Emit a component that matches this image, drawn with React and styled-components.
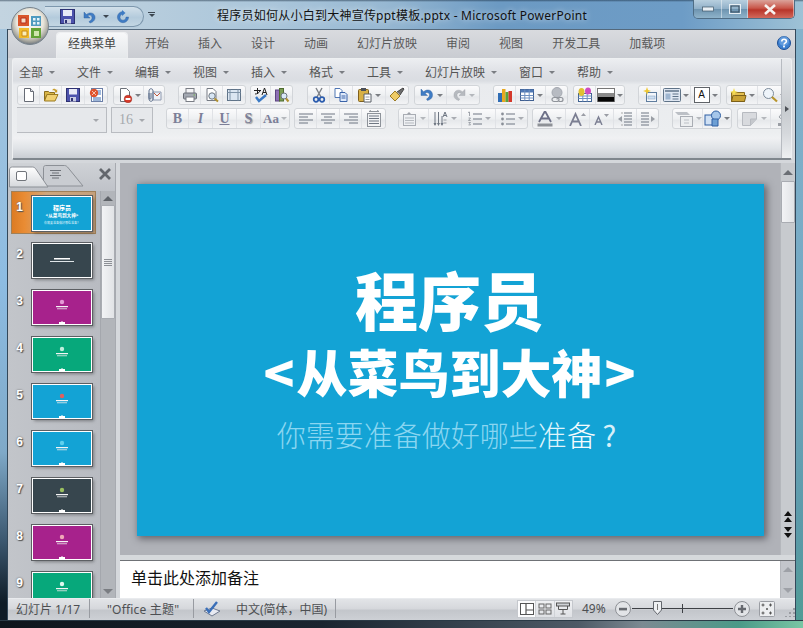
import React from "react";
import styled, { createGlobalStyle } from "styled-components";

const Global = createGlobalStyle`
  html, body { margin: 0; padding: 0; background: #000; }
  #root { width: 803px; height: 628px; }
`;
const CJK = `"Noto Sans", "Noto Sans CJK SC", sans-serif`;

const Window = styled.div`
  position: relative; width: 803px; height: 628px; overflow: hidden;
  display: flex; flex-direction: column; box-sizing: border-box;
  font-family: ${CJK}; font-size: 12px; color: #555;
  background:
    linear-gradient(180deg, #a8c6dc 0%, #8dbce2 45%, #7fa9c8 72%, #3c5870 86%, #0e1b26 96%) left top / 7px 100% no-repeat,
    linear-gradient(180deg, #86b3cc 0%, #74a9c4 50%, #5b9aa8 85%, #4f9c94 100%) right top / 7px 100% no-repeat,
    #6f9fc7;
`;
const TitleBar = styled.div`
  height: 29px; flex: none; display: flex; align-items: flex-start; box-sizing: border-box;
  background:
    linear-gradient(180deg, rgba(20,40,60,.55) 0, rgba(20,40,60,0) 2px),
    linear-gradient(90deg, #c3d4e0 0%, #b7cddd 18%, #a9c5da 35%, #97b8d2 48%, #6c9ac3 62%, #6d9cc6 85%, #9ec2d6 100%);
`;
const Qat = styled.div`
  margin: 6px 0 0 45px; width: 99px; height: 21px; box-sizing: border-box; flex: none;
  padding-left: 15px; display: flex; align-items: center; gap: 7px;
  border: 1px solid #7d97ad; border-left: 0; border-radius: 0 12px 12px 0;
  background: linear-gradient(180deg, #d2e0ea, #b4cbdc 55%, #c3d6e3);
`;
const QatMore = styled.div`
  margin: 12px 0 0 4px; width: 7px; flex: none; display: flex; flex-direction: column; align-items: center; gap: 1px;
  &::before { content: ""; width: 7px; height: 1px; background: #3b4650; }
`;
const Title = styled.div`
  flex: 1; padding: 8px 44px 0 0; text-align: center; font-size: 12px; line-height: 16px; color: #111; white-space: nowrap;
  letter-spacing: .24px; text-shadow: 0 0 6px rgba(255,255,255,.8);
`;
const WinControls = styled.div`
  flex: none; width: 102px; height: 19px; margin-right: 8px; display: flex; box-sizing: border-box;
  border: 1px solid #4f6d85; border-top: 0; border-radius: 0 0 5px 5px; overflow: hidden;
`;
const WinBtn = styled.div`
  display: flex; align-items: center; justify-content: center; box-sizing: border-box;
  width: ${p => p.$w}px; border-right: 1px solid rgba(255,255,255,.45);
  background: ${p => p.$close
    ? "linear-gradient(180deg, #dba39a 0, #c9574a 45%, #b8352a 55%, #d2695c 100%)"
    : "linear-gradient(180deg, #b8cfdf 0, #90b0c8 48%, #6e94b0 52%, #8fb3ca 100%)"};
`;
const OfficeBtn = styled.div`
  position: absolute; left: 11px; top: 7px; width: 38px; height: 38px; z-index: 5;
`;
const Client = styled.div`
  flex: 1; min-height: 0; margin: 0 7px; display: flex; flex-direction: column;
  border-left: 1px solid #33485a; border-right: 1px solid #33485a; background: #d5d8dc;
`;
const TabStrip = styled.div`
  height: 29px; flex: none; box-sizing: border-box; padding: 3px 0 0 49px; display: flex; align-items: stretch;
  border-top: 1px solid #54697c; position: relative;
  background: linear-gradient(180deg, #d9dbdf 0, #c9ccd2 100%);
`;
const Tab = styled.div`
  display: flex; align-items: center; box-sizing: border-box; line-height: 20px; color: #5a5a5a; padding-bottom: 4px;
  ${p => p.$active ? `
    padding-left: 11px; padding-right: 11px; margin-right: 3.5px; color: #444; border-radius: 3px 3px 0 0;
    background: linear-gradient(180deg, #f7f8f9, #e4e7ea);
    box-shadow: 0 0 0 1px rgba(255,255,255,.6);
  ` : `padding-left: 14.5px; padding-right: 14.5px;`}
`;
const HelpWrap = styled.div`
  margin-left: auto; margin-right: 4px; margin-top: 3px;
`;
const Ribbon = styled.div`
  height: 102px; flex: none; box-sizing: border-box; margin: 0 3px 0 4px; padding: 3px 9px 0 4px;
  position: relative; overflow: hidden;
  border: 1px solid #eef0f2; border-bottom: 2px solid #7f868d; border-radius: 3px 3px 2px 2px;
  background: linear-gradient(180deg, #eceef1 0, #dee0e5 14%, #dadde2 22%, #e9ebee 26%, #eceef0 74%, #f0f1f3 80%, #e0e3e7 90%, #c9cdd3 100%);
`;
const MenuRow = styled.div`
  height: 21px; display: flex; align-items: center; padding-left: 2px;
`;
const Menu = styled.div`
  width: ${p => p.$w}px; flex: none; display: flex; align-items: center; gap: 6px; color: #555; line-height: 18px;
`;
const Arrow = styled.span`
  display: inline-block; width: 0; height: 0; flex: none;
  border-left: 3px solid transparent; border-right: 3px solid transparent; border-top: 3px solid ${p => p.$c || "#7a7d82"};
`;
const ToolRow = styled.div`
  display: flex; align-items: flex-start; margin-top: 2px; height: ${p => p.$h}px; width: 770px; overflow: hidden;
`;
const Group = styled.div`
  display: flex; flex: none; height: ${p => p.$h || 18}px; margin-left: ${p => p.$ml || 0}px; box-sizing: content-box;
  border: 1px solid #d2d5d9; border-radius: 3px; margin-top: ${p => p.$mt || 0}px;
  background: linear-gradient(180deg, #fbfbfc 0, #eef0f2 50%, #e6e8eb 60%, #f3f4f6 100%);
`;
const Btn = styled.div`
  width: ${p => p.$w || 22}px; flex: none; display: flex; align-items: center; justify-content: center; gap: 2px;
  box-sizing: border-box; border-right: 1px solid #e0e2e6;
  &:last-child { border-right: 0; }
`;
const Letter = styled.span`
  font-family: "Liberation Serif", serif; font-size: ${p => p.$s || 14}px; font-weight: 700; color: #7c7f98;
  font-style: ${p => p.$i ? "italic" : "normal"}; text-decoration: ${p => p.$u ? "underline" : "none"};
  text-shadow: ${p => p.$sh ? "1px 1px 1px #999" : "none"};
`;
const Combo = styled.div`
  width: ${p => p.$w}px; height: 26px; box-sizing: border-box; flex: none; margin-right: 4px;
  margin-left: ${p => p.$ml || 0}px;
  display: flex; align-items: center; padding: 0 7px; justify-content: space-between;
  border: 1px solid #b9bcc1; background: #e6e8eb; color: #a5a8ad;
  font-family: "Liberation Serif", serif; font-size: 14px;
`;
const Chevron = styled.div`
  position: absolute; right: 0; top: 0; bottom: 0; width: 9px; display: flex; align-items: center; justify-content: center;
  border-left: 1px solid #b7bbc1;
  background: linear-gradient(180deg, #e7e9ec 0, #c6cace 50%, #d5d8dc 75%, #eef0f2 100%);
  &::after { content: ""; border-top: 3px solid transparent; border-bottom: 3px solid transparent; border-left: 4px solid #4d5157; }
`;
const Workspace = styled.div`
  height: 438px; flex: none; box-sizing: border-box; padding-top: 3px; display: flex; background: #d4d7db;
`;
const SidePane = styled.div`
  width: 107px; flex: none; display: flex; flex-direction: column; background: #bdc0c6;
`;
const SideTabs = styled.div`
  height: 28px; flex: none; box-sizing: border-box; display: flex; align-items: flex-start; padding-top: 1px;
  background: linear-gradient(180deg, #cfd2d6, #bfc2c8);
`;
const CloseX = styled.div`
  margin: 3px 3px 0 auto;
`;
const ListWrap = styled.div`
  flex: 1; min-height: 0; display: flex;
`;
const ThumbList = styled.div`
  width: 92px; flex: none; overflow: hidden; display: flex; flex-direction: column; gap: 4px;
  background: linear-gradient(90deg, #c2c5ca, #b8bbc1);
`;
const ThumbRow = styled.div`
  height: 43px; flex: none; margin-left: 3px; width: 85px; box-sizing: border-box; display: flex; position: relative;
  ${p => p.$sel && `
    background: linear-gradient(90deg, #db7a22 0, #e98c34 16%, #cfa77e 42%, #c4a07c 100%);
    box-shadow: inset 0 0 0 1px #a08058;
  `}
`;
const Num = styled.div`
  width: 21px; flex: none; text-align: center; padding: 9px 4px 0 0; box-sizing: border-box;
  font-family: "Liberation Sans", sans-serif; font-size: 12px; font-weight: 700; line-height: 14px; color: #fff;
  text-shadow: 1px 1px 1px #555, 0 0 2px #666;
`;
const Thumb = styled.div`
  width: 60px; height: 35px; margin-top: 5px; flex: none; box-sizing: border-box;
  border: 1px solid #fff; outline: 1px solid #5c5f63; outline-offset: 0; overflow: hidden;
  background: ${p => p.$c}; box-shadow: 2px 2px 3px rgba(0,0,0,.35);
  display: flex; flex-direction: column; align-items: center; color: #fff; white-space: nowrap;
`;
const MiniA = styled.div`font-size: 6px; line-height: 7px; font-weight: 900; margin-top: 8px;`;
const MiniB = styled.div`font-size: 4.6px; line-height: 6px; font-weight: 700;`;
const MiniC = styled.div`font-size: 3px; line-height: 6px; color: #d8f0fa; margin-top: 2px;`;
const ScrollBar = styled.div`
  width: 15px; flex: none; box-sizing: border-box; display: flex; flex-direction: column; align-items: stretch;
  background: ${p => p.$bg || "#b2b5ba"}; border-left: 1px solid ${p => p.$line || "#a4a7ad"};
`;
const SBtn = styled.div`
  height: ${p => p.$h || 14}px; flex: none; display: flex; align-items: center; justify-content: center;
`;
const Up = styled.span`width: 0; height: 0; border-left: 5px solid transparent; border-right: 5px solid transparent; border-bottom: 5px solid ${p => p.$c || "#5e6268"};`;
const Down = styled.span`width: 0; height: 0; border-left: 5px solid transparent; border-right: 5px solid transparent; border-top: 5px solid ${p => p.$c || "#7a7d82"};`;
const SThumb = styled.div`
  height: ${p => p.$h}px; flex: none; box-sizing: border-box; display: flex; align-items: center; justify-content: center;
  border: 1px solid #a9acb2; border-radius: 1px;
  background: linear-gradient(90deg, #f2f3f5, #e1e3e6);
`;
const Grip = styled.div`
  width: 8px; height: 7px; background: repeating-linear-gradient(180deg, #8c8f95 0 1px, transparent 1px 2px);
`;
const SSpace = styled.div`flex: 1;`;
const Splitter = styled.div`width: 5px; flex: none; background: #d5d8dc; border-left: 1px solid #a7aab0; box-sizing: border-box;`;
const MainCol = styled.div`width: 675px; flex: none; display: flex; flex-direction: column;`;
const Upper = styled.div`height: 392px; flex: none; display: flex;`;
const Stage = styled.div`
  width: 660px; flex: none; box-sizing: border-box; padding: 21px 0 0 17px; background: #b0b2b8;
`;
const Slide = styled.div`
  width: 627px; height: 352px; box-sizing: border-box; padding-top: 78px; background: #13a3d5;
  box-shadow: 2px 2px 7px 1px rgba(40,40,50,.55);
  display: flex; flex-direction: column; align-items: center; color: #fff; white-space: nowrap;
  font-family: "Noto Sans CJK SC", sans-serif;
`;
const Head = styled.div`font-size: 63px; line-height: 72px; font-weight: 900; margin-left: -2px;`;
const Sub = styled.div`font-size: 51px; line-height: 74px; font-weight: 900; display: flex; align-items: center; gap: 2px; margin-left: -2px;`;
const Tag = styled.div`font-size: 29px; line-height: 44px; font-weight: 300; color: #8ad6f1; display: flex; margin-top: 4px; margin-left: -8px;`;
const TagPart = styled.span`color: ${p => p.$c}; font-weight: ${p => p.$w || 300};`;
const Sep = styled.div`height: 5px; flex: none; background: #d6d9dc;`;
const Lower = styled.div`height: 38px; flex: none; display: flex; border-top: 1px solid #6f7276; box-sizing: border-box;`;
const Notes = styled.div`
  width: 660px; flex: none; box-sizing: border-box; padding-left: 11px; background: #fff; color: #111;
  font-size: 16px; line-height: 32px; font-family: "Noto Sans CJK SC", sans-serif;
`;
const StatusBar = styled.div`
  height: 22px; flex: none; display: flex; align-items: center; box-sizing: border-box; color: #4d4f52;
  border-top: 1px solid #e9ebee; padding-bottom: 2px;
  background: linear-gradient(180deg, #e2e4e7 0, #d6d8dc 45%, #c3c6cb 55%, #cdd0d5 100%);
`;
const Seg = styled.div`
  width: ${p => p.$w}px; height: 100%; flex: none; box-sizing: border-box; padding-left: ${p => p.$pl}px;
  display: flex; align-items: center; border-right: 1px solid #989ba1; white-space: nowrap; gap: ${p => p.$gap || 0}px;
  letter-spacing: ${p => p.$ls || 0}px;
`;
const StatusRight = styled.div`
  margin-left: auto; display: flex; align-items: center; height: 100%;
`;
const ViewGroup = styled.div`
  display: flex; width: 56px; height: 18px; box-sizing: border-box; border: 1px solid #c5c8cd;
  background: linear-gradient(180deg, #f0f1f3, #dfe1e5); margin-right: 9px;
`;
const ViewBtn = styled.div`
  flex: 1; display: flex; align-items: center; justify-content: center; border-right: 1px solid #d0d3d7;
  background: ${p => p.$on ? "#fbfbfc" : "transparent"};
  &:last-child { border-right: 0; }
`;
const Pct = styled.div`width: 24px; margin-right: 9px; font-size: 12px; white-space: nowrap;`;
const ZoomBtn = styled.div`width: 16px; height: 16px; flex: none;`;
const Track = styled.div`
  width: 101px; margin: 0 1px; height: 1px; background: #3d4045; position: relative; flex: none;
`;
const Handle = styled.div`position: absolute; left: 21px; top: -7px; width: 9px; height: 14px;`;
const Tick = styled.div`position: absolute; left: 50px; top: -4px; width: 1px; height: 9px; background: #3d4045;`;
const Fit = styled.div`width: 16px; height: 16px; margin-left: 9px; flex: none;`;
const SizeGrip = styled.div`width: 10px; height: 10px; margin: 6px 0 0 10px; flex: none;`;
const BottomFrame = styled.div`
  height: 8px; flex: none; border-top: 1px solid #2a3a46; box-sizing: border-box;
  background: linear-gradient(90deg, #0e151c 0, #1a2530 40%, #4d5a66 72%, #7b8a92 80%, #4a9a88 92%, #79c6a4 100%);
`;

const G = ({ children, w = 16, h = 16, vb }) => (
  <svg width={w} height={h} viewBox={vb || `0 0 ${w} ${h}`} style={{ display: "block", flex: "none" }}>{children}</svg>
);

const OfficeLogo = () => (
  <G w={38} h={38}>
    <defs>
      <radialGradient id="orb" cx="50%" cy="40%" r="60%">
        <stop offset="0" stopColor="#fbfbf6" /><stop offset=".6" stopColor="#e9e6dc" /><stop offset=".85" stopColor="#a9a89f" /><stop offset="1" stopColor="#6f7780" />
      </radialGradient>
    </defs>
    <circle cx="19" cy="19" r="18.5" fill="url(#orb)" stroke="#77838d" />
    <path d="M7 8h11v11H7z" fill="#d9562a" /><path d="M10 11h5v5h-5z" fill="#f6dcc2" stroke="#b8301c" />
    <path d="M20 9h10v10H20z" fill="#4f9bc0" /><path d="M22 11h2.500v2.500H22zM26 11h2.500v2.500H26zM22 15h2.500v2.500H22zM26 15h2.500v2.500H26z" fill="#e7f3f8" />
    <path d="M8 21h10v10H8z" fill="#f1bb2a" /><path d="M11 24h5v5h-5z" fill="#fbeeb8" stroke="#c98a14" />
    <path d="M20 21h10v10H20z" fill="#62a336" /><path d="M23 24h5v5h-5z" fill="#cfe6ad" />
  </G>
);
const I = {
  qSave: <G w={15} h={15}><rect x=".5" y=".5" width="14" height="14" fill="#4c52ac" stroke="#2d3172" /><rect x="3" y="1" width="9" height="6" fill="#e8eaf6" /><rect x="4" y="10" width="7" height="4.5" fill="#c9cce2" /><rect x="5" y="11" width="2" height="3" fill="#2d3172" /></G>,
  qUndo: <G w={14} h={14}><path d="M2 2v6h6L5.6 5.8C7.5 4.4 9.8 5.2 10 7.2c.2 2-1 3.4-3 4.4l1 1.4c3.6-1 5.4-3.2 5-6.2C12.6 3 8 1.500 4.4 4.500z" fill="#3f7cc4" stroke="#2a5a9a" strokeWidth=".4" /></G>,
  qRedo: <G w={14} h={14}><path d="M7 1.500a5.600 5.600 0 1 0 5.600 5.600h-2.600A3 3 0 1 1 7 4.200z" fill="#3f7cc4" stroke="#2a5a9a" strokeWidth=".4" /><path d="M6 0v6l3.500-3z" fill="#3f7cc4" /></G>,
  min: <G w={12} h={6}><rect x=".5" y="1" width="11" height="4" fill="#e8eff4" stroke="#3f5668" strokeWidth=".7" /></G>,
  max: <G w={12} h={10}><rect x=".5" y=".5" width="11" height="9" fill="none" stroke="#e8eff4" /><rect x="2" y="2" width="8" height="6" fill="none" stroke="#34495a" /></G>,
  close: <G w={14} h={11}><path d="M2 1l10 9M12 1L2 10" stroke="#f7f1ee" strokeWidth="2.600" /></G>,
  help: <G w={14} h={14}><circle cx="7" cy="7" r="6.500" fill="#3b7fd0" stroke="#1d4e94" /><circle cx="7" cy="5" r="5" fill="#86b6ea" opacity=".5" /><path d="M4.800 5.400C4.800 2.600 9.400 2.600 9.400 5.200 9.400 6.800 7 6.800 7 8.600" fill="none" stroke="#fff" strokeWidth="1.600" /><rect x="6.100" y="9.600" width="1.800" height="1.800" fill="#fff" /></G>,
  new: <G><path d="M3.500 1.500h6l3 3v10h-9z" fill="#fff" stroke="#666b75" /><path d="M9.500 1.500v3h3" fill="#dfe2ea" stroke="#666b75" /></G>,
  open: <G><path d="M1.500 4.500h4l1 1h5v2H4l-2.500 6z" fill="#d9b648" stroke="#8a6d20" /><path d="M4 7.500h11l-3 6.500H1.500z" fill="#f0d071" stroke="#9a7a20" /><path d="M9 3.400c1-2.200 3.200-2.200 4.200-.4l1-.8v3.200h-3l1-1c-.7-1-1.900-1.200-3.200-1z" fill="#c9a030" /></G>,
  save: <G><rect x="1.500" y="1.500" width="13" height="13" fill="#4c52ac" stroke="#2d3172" /><rect x="4" y="2" width="8" height="5.500" fill="#e8eaf6" /><rect x="5" y="10" width="6" height="4.500" fill="#c9cce2" /><rect x="6" y="11" width="2" height="3" fill="#2d3172" /></G>,
  ppt: <G><rect x="3.500" y="1.500" width="11" height="13" fill="#fff" stroke="#6b7fa8" /><rect x="9" y="3" width="4" height="5" fill="#9fb8dc" /><circle cx="6" cy="6" r="4.200" fill="#e0532c" /><path d="M4 4l4 4M4 8l4-4" stroke="#f6c4b0" /><path d="M5 11h8M5 13h8" stroke="#3a6db0" /></G>,
  perm: <G><path d="M3.500 1.500h6l3 3v10h-9z" fill="#fff" stroke="#6b7078" /><circle cx="11" cy="12" r="3.800" fill="#d83a2a" stroke="#902014" strokeWidth=".5" /><rect x="8.600" y="11" width="4.800" height="2" fill="#fff" /></G>,
  attach: <G><path d="M7 5h8v8H7z" fill="#eef2f8" stroke="#8f9ab0" /><path d="M8 6l3 3 3-3" fill="none" stroke="#c0563a" /><path d="M3 6v6c0 3 4 3 4 0V4C7 1 3 1 3 4v7c0 1.500 2 1.500 2 0V6" fill="none" stroke="#5d6f8c" /></G>,
  print: <G><rect x="4" y="1.500" width="8" height="5" fill="#f4f4f6" stroke="#7a7e86" /><rect x="1.500" y="6" width="13" height="6" rx="1" fill="#a4a9b2" stroke="#686d76" /><rect x="4" y="10" width="8" height="4.500" fill="#fff" stroke="#7a7e86" /><rect x="11.500" y="7.500" width="1.500" height="1" fill="#6fb04a" /></G>,
  preview: <G><path d="M3 1.500h6l3 3v9H3z" fill="#fff" stroke="#767b84" /><circle cx="8" cy="9" r="3.200" fill="#d8e6f4" stroke="#6d7680" /><path d="M10.500 11.500l3.500 3" stroke="#b09030" strokeWidth="2" /></G>,
  sheet: <G><rect x="1.500" y="2.500" width="13" height="11" fill="#dbe6f2" stroke="#5f7388" /><path d="M1.500 5.500h13M4 2.500v11M12 2.500v11" stroke="#7f93a8" /></G>,
  spell: <G><path d="M1 3.500h7M4.500 1v6M2 7c2 0 4-1 5-3" fill="none" stroke="#222" /><path d="M9 8l2.500-7L14 8M10 5.500h3" fill="none" stroke="#222" /><path d="M3 10l3 4 7-6" fill="none" stroke="#3a79c4" strokeWidth="2.400" /></G>,
  research: <G><rect x="1.500" y="3" width="4" height="11" fill="#8d6fb4" stroke="#5a4480" /><rect x="5.500" y="1.500" width="4" height="12.500" fill="#7b9c54" stroke="#4f6c30" /><circle cx="10" cy="9" r="3" fill="#d9e8f6" stroke="#6d7680" /><path d="M12 11.500l2.500 3" stroke="#b09030" strokeWidth="2" /></G>,
  cut: <G><path d="M5 1l5 9M11 1L6 10" stroke="#7d8188" strokeWidth="1.400" /><circle cx="5" cy="12.500" r="2.300" fill="none" stroke="#2b5cae" strokeWidth="1.700" /><circle cx="11" cy="12.500" r="2.300" fill="none" stroke="#2b5cae" strokeWidth="1.700" /></G>,
  copy: <G><path d="M2 1.500h5l2 2v7H2z" fill="#fff" stroke="#4f76b4" /><path d="M7 5.500h5l2 2v7H7z" fill="#dfeafa" stroke="#3a63a8" /><path d="M8.500 9h4M8.500 11h4" stroke="#3a63a8" /></G>,
  paste: <G><rect x="1.500" y="2.500" width="10" height="12" rx="1" fill="#d7b045" stroke="#80601c" /><rect x="4" y="1" width="5" height="3" fill="#4a4f58" /><path d="M7 7h7v8H7z" fill="#fff" stroke="#5b6068" /><path d="M8.500 10h4M8.500 12.500h4" stroke="#9a9ea5" /></G>,
  painter: <G><path d="M1 9l5-5 5 5-5 5z" fill="#eecb66" stroke="#9b7a24" /><path d="M8 5l6-4 1 1-4 6" fill="#6f6f6f" stroke="#444" /></G>,
  undo: <G><path d="M2 2v6.500h6.500L6 6.200c2-1.400 4.300-.6 4.500 1.400.2 2-1 3.400-3 4.400l1 1.500c3.600-1 5.400-3.300 5-6.300C13 3 8.300 1.500 4.600 4.700z" fill="#3f7cc4" stroke="#2a5a9a" strokeWidth=".4" /></G>,
  redo: <G><path d="M14 2.500v6H8l2.300-2.200C8.500 5 6.300 5.700 6 7.700c-.2 2 .8 3.300 2.700 4.300l-1 1.500C4.200 12.500 2.500 10.300 3 7.300 3.500 3.200 8 1.800 11.500 4.800z" fill="#b6babf" stroke="#9ca0a6" strokeWidth=".4" /></G>,
  chart: <G><rect x="1" y="6" width="4" height="9" fill="#2f6db5" /><rect x="5" y="2" width="3.500" height="13" fill="#e8a820" /><rect x="8.500" y="5" width="3" height="10" fill="#5ba33c" /><rect x="11.500" y="4" width="3.500" height="11" fill="#d4382a" /></G>,
  table: <G><rect x="1.500" y="2.500" width="13" height="11" fill="#fff" stroke="#3f5f90" /><rect x="1.500" y="2.500" width="13" height="3" fill="#4f78b4" /><path d="M1.500 8.500h13M1.500 11h13M5.800 2.500v11M10.200 2.500v11" stroke="#6f90c0" /></G>,
  link: <G><circle cx="8" cy="5.500" r="5" fill="#b7bbc2" stroke="#a4a8b0" /><path d="M3 12.500a2 2 0 0 1 2-2h3a2 2 0 0 1 0 4H5a2 2 0 0 1-2-2zM8 12.500a2 2 0 0 1 2-2h2a2 2 0 0 1 0 4h-2" fill="none" stroke="#8f939a" strokeWidth="1.200" /></G>,
  colors: <G><rect x="1.500" y="6.500" width="13" height="8" fill="#fff" stroke="#3f6190" /><path d="M1.500 9h13M1.500 11.500h13M5.800 6.500v8M10.200 6.500v8" stroke="#6f90c0" /><ellipse cx="4.500" cy="5" rx="3" ry="4" fill="#e0c030" /><ellipse cx="11" cy="4" rx="3" ry="3.500" fill="#d04cc0" /></G>,
  fill: <G w={18} h={14}><rect x=".5" y=".5" width="17" height="13" fill="#fff" stroke="#777" /><rect x="1" y="5" width="16" height="4" fill="#8a8a8a" /><rect x="1" y="9" width="16" height="4.500" fill="#050505" /></G>,
  newSlide: <G><rect x="4.500" y="5.500" width="10" height="9" fill="#f4f7fb" stroke="#5f7d9e" /><rect x="6" y="9" width="7" height="3" fill="#cfe0f2" stroke="#7f9dbc" strokeWidth=".5" /><path d="M5 0l1 3 3 1-3 1-1 3-1-3-3-1 3-1z" fill="#f0c830" /></G>,
  layout: <G w={18} h={14}><rect x=".5" y=".5" width="17" height="13" rx="1" fill="#dfe7f2" stroke="#5f7388" /><path d="M2 3h14" stroke="#5f7388" strokeWidth="1.500" /><rect x="2.500" y="5.500" width="5" height="6" fill="#9fb6d0" /><path d="M9.500 6h6M9.500 8.500h6M9.500 11h6" stroke="#5f7388" /></G>,
  folder: <G w={17} h={15}><path d="M1.500 4.500h13v9h-13z" fill="#e4c050" stroke="#8a6d20" /><path d="M3 7.500h13l-1.500 6h-13z" fill="#c9a234" stroke="#7b5f18" /><path d="M4 0l1 3 3 1-3 1-1 3-1-3-3-1 3-1z" fill="#f4dc50" /></G>,
  search: <G><circle cx="6.500" cy="6.500" r="5" fill="#eef4fa" stroke="#7b8a9a" /><path d="M10 10l5 4.500" stroke="#b8952c" strokeWidth="2.200" /></G>,
  alL: <G><path d="M1 3h14M1 6h9M1 9h14M1 12h9" stroke="#6f7783" /></G>,
  alC: <G><path d="M1 3h14M4 6h8M1 9h14M4 12h8" stroke="#6f7783" /></G>,
  alR: <G><path d="M1 3h14M6 6h9M1 9h14M6 12h9" stroke="#6f7783" /></G>,
  alJ: <G w={16} h={18}><rect x="1.500" y="3.500" width="13" height="13" fill="#f2f3f5" stroke="#8e939a" /><path d="M3 6h10M3 8.500h10M3 11h10M3 13.500h10" stroke="#6f7783" /><path d="M3 1.500h10" stroke="#8e939a" /><path d="M3 1.500l2-1M13 1.500l-2-1" stroke="#8e939a" /></G>,
  txtDir: <G><rect x="1.500" y="3.500" width="12" height="11" fill="#eef0f3" stroke="#a9adb4" /><path d="M3 7h9M3 9.500h9M3 12h9" stroke="#b5b9bf" /><path d="M7 1l-2 2h4z" fill="#9ea2a9" /></G>,
  valign: <G><path d="M2 1v13M5.500 1v13M9 5v9" stroke="#6f7783" /><path d="M.5 12l1.500 3 1.500-3zM4 12l1.500 3L7 12zM7.500 12L9 15l1.500-3z" fill="#6f7783" /><path d="M10 6l2-5 2 5M11 4.500h2" fill="none" stroke="#6f7783" /><path d="M10.500 9h3M10.500 12h3" stroke="#9a9ea5" /></G>,
  numList: <G><path d="M6 3h9M6 8h9M6 13h9" stroke="#6f7783" /><path d="M1 1.500l1.500-.5v4M1.500 7h2l-2 2.500h2.200M1.500 11.500h2l-1 1.200 1 1.200h-2" fill="none" stroke="#8a8f98" strokeWidth=".8" /></G>,
  bulList: <G><path d="M6 3h9M6 8h9M6 13h9" stroke="#6f7783" /><circle cx="2.500" cy="3" r="1.400" fill="#8a8f98" /><circle cx="2.500" cy="8" r="1.400" fill="#8a8f98" /><circle cx="2.500" cy="13" r="1.400" fill="#8a8f98" /></G>,
  fontCol: <G w={18} h={16}><path d="M3 11L8.500 1h1L15 11M5.500 7.500h7" fill="none" stroke="#6d7088" strokeWidth="1.800" /><rect x="1.500" y="12.500" width="15" height="3" fill="#8e9197" /></G>,
  grow: <G w={18} h={14}><path d="M1 14L6.500 2 12 14M3.500 9.500h6" fill="none" stroke="#7b7e92" strokeWidth="1.800" /><path d="M12 4l2.500-3L17 4z" fill="#9a9da5" /></G>,
  shrink: <G w={16} h={12}><path d="M1 12L4.500 4 8 12M2.500 9h4" fill="none" stroke="#7b7e92" strokeWidth="1.400" /><path d="M10 1h5l-2.500 3z" fill="#9a9da5" /></G>,
  dedent: <G><path d="M7 2h8M7 5h8M7 8h8M7 11h8M7 14h8" stroke="#6f7783" /><path d="M1 8l4-3v6z" fill="#9a9ea5" /><path d="M4 2h2M4 14h2" stroke="#aaa" /></G>,
  indent: <G><path d="M1 2h8M1 5h8M1 8h8M1 11h8M1 14h8" stroke="#6f7783" /><path d="M15 8l-4-3v6z" fill="#9a9ea5" /></G>,
  shapeA: <G w={20} h={16}><path d="M1 1h12l3 3H4z" fill="#bcc0c6" /><rect x="6.500" y="5.500" width="12" height="10" fill="#eceef0" stroke="#a9adb4" /><path d="M10 9h5M10 12h5" stroke="#bcc0c6" /></G>,
  shapes: <G w={18} h={17}><rect x="1" y="5" width="9" height="10" fill="#cfe0f4" stroke="#2e5fa3" /><circle cx="12" cy="5.500" r="4.500" fill="#a5c6ea" stroke="#2e5fa3" /><path d="M8 9h6v7H8z" fill="#6d9fd4" stroke="#2e5fa3" /></G>,
  quick: <G w={18} h={17}><path d="M1.500 2.500h14V9l-6 6.500h-8z" fill="#d8dade" stroke="#b7bac0" /><path d="M9.500 15.500V9h6" fill="#c5c8cd" stroke="#b7bac0" /></G>,
  bucket: <G w={20} h={17}><path d="M8 1l6 6-5 5-6-5z" fill="#eceef0" stroke="#9a9ea5" /><rect x="2" y="13" width="16" height="3" fill="#9a9ea5" /></G>,
  viewN: <G w={14} h={12}><rect x=".5" y=".5" width="13" height="11" fill="#fff" stroke="#555" /><path d="M6 .5v11M6 7h7.500" stroke="#555" strokeWidth="1.200" /></G>,
  viewS: <G w={14} h={12}><rect x="1" y="1" width="5" height="4" fill="none" stroke="#666" /><rect x="8" y="1" width="5" height="4" fill="none" stroke="#666" /><rect x="1" y="7" width="5" height="4" fill="none" stroke="#666" /><rect x="8" y="7" width="5" height="4" fill="none" stroke="#666" /></G>,
  viewP: <G w={14} h={13}><rect x=".5" y="1" width="13" height="3" fill="#cfd2d6" stroke="#555" /><path d="M2.500 4v3.500h9V4M7 7.500V12M4.500 12h5" fill="none" stroke="#555" /></G>,
  spellS: <G w={20} h={18}><path d="M2 11l8-3 8 3-8 5z" fill="#e8eaf2" stroke="#6f7a90" /><path d="M4 8l3 4L15 2" fill="none" stroke="#3a6fb8" strokeWidth="2.400" /></G>,
  minus: <G><circle cx="8" cy="8" r="7.500" fill="#e2e4e7" stroke="#8e9196" /><rect x="4" y="6.800" width="8" height="2.600" fill="#66696f" /></G>,
  plus: <G><circle cx="8" cy="8" r="7.500" fill="#e2e4e7" stroke="#8e9196" /><path d="M4 8h8M8 4v8" stroke="#66696f" strokeWidth="2.400" /></G>,
  handle: <G w={9} h={14}><path d="M.5.5h8V9l-4 4.500-4-4.500z" fill="#eef0f2" stroke="#63676d" /><path d="M4.500 3v6" stroke="#777" /></G>,
  fit: <G><rect x=".5" y=".5" width="15" height="15" rx="1" fill="#eceef0" stroke="#9a9da3" /><path d="M4 2.500v3M2.500 4h3M11.500 2.500v3M10 4h3M4 10.500v3M2.500 12h3M11.500 10.500v3M10 12h3M8 7v2M7 8h2" stroke="#555" /></G>,
  sgrip: <G w={10} h={10}><path d="M8 1h2v2H8zM8 5h2v2H8zM4 5h2v2H4zM8 9h2v1H8zM4 9h2v1H4zM0 9h2v1H0z" fill="#9a9da2" /></G>,
  x: <G w={14} h={14}><path d="M2 2l10 10M12 2L2 12" stroke="#63676d" strokeWidth="2.800" /></G>,
  tabs: <G w={78} h={24}>
    <defs><linearGradient id="tg" x1="0" x2="0" y1="0" y2="1"><stop offset="0" stopColor="#fff" /><stop offset="1" stopColor="#d5d8dc" /></linearGradient></defs>
    <path d="M35.500 22V3.500c0-1 1-2 2-2h19c1 0 2 .5 3 1.500L75 22z" fill="#c9ccd1" stroke="#8c9096" />
    <path d="M1.500 23V6c0-2 1-3 3-3h20c1 0 2 .5 3 1.500L40 23z" fill="url(#tg)" stroke="#8c9096" />
    <rect x="8.500" y="7.500" width="10" height="9" rx="1.500" fill="#fff" stroke="#70747a" />
    <path d="M42 6.500h11M44 9h7M42 11.500h11M44 14h7" stroke="#6d7177" />
  </G>,
};

const ART = {
  bars: (<><rect x="21" y="14" width="16" height="1.500" fill="#fff" /><rect x="17" y="17" width="24" height="1" fill="#dfe5e8" /></>),
  std: (c) => (<>
    <circle cx="29" cy="11" r="2.200" fill={c} />
    <rect x="23" y="15" width="12" height="1.200" fill="#f4f4f4" />
    <rect x="24" y="17.400" width="10" height=".8" fill="#e8e8e8" />
    <path d="M28.500 30h1v1h2.500v2h-6v-2h2.500z" fill="#fff" />
  </>),
};
const MiniArt = ({ kind, c }) => (
  <G w={58} h={33}>{kind === "bars" ? ART.bars : ART.std(c)}</G>
);

const SLIDES = [
  { n: 1, c: "#13a3d5", title: true },
  { n: 2, c: "#37464e", kind: "bars" },
  { n: 3, c: "#a7228c", i: "#e49ad6" },
  { n: 4, c: "#07a87b", i: "#bfeedd" },
  { n: 5, c: "#13a3d5", i: "#e2605e" },
  { n: 6, c: "#13a3d5", i: "#5fd0ee" },
  { n: 7, c: "#37464e", i: "#9ac060" },
  { n: 8, c: "#a7228c", i: "#f0a8b8" },
  { n: 9, c: "#07a87b", i: "#e0f8ee" },
];
const MENUS = [["全部", 58], ["文件", 58], ["编辑", 58], ["视图", 58], ["插入", 58], ["格式", 58], ["工具", 58], ["幻灯片放映", 94], ["窗口", 58], ["帮助", 58]];
const TABS = ["开始", "插入", "设计", "动画", "幻灯片放映", "审阅", "视图", "开发工具", "加载项"];

const ROW1 = [
  [0, [["new", 22], ["open", 22], ["save", 23], ["ppt", 22]]],
  [5, [["perm", 30, 1], ["attach", 20]]],
  [13, [["print", 22], ["preview", 22], ["sheet", 22]]],
  [4, [["spell", 20], ["research", 21]]],
  [14, [["cut", 22], ["copy", 23], ["paste", 33, 1], ["painter", 22]]],
  [5, [["undo", 32, 1], ["redo", 32, 1, "#b4b7bc"]]],
  [13, [["chart", 22], ["table", 30, 1], ["link", 21]]],
  [5, [["colors", 22], ["fill", 28, 1]]],
  [13, [["newSlide", 22], ["layout", 30, 1], ["textA", 29, 1]]],
  [5, [["folder", 31, 1], ["search", 31, 1]]],
];
const ROW2B = [
  [4, [["alL", 22], ["alC", 23], ["alR", 22], ["alJ", 23]]],
  [12, [["txtDir", 30, 1, "#b4b7bc"], ["valign", 33, 1, "#a9acb2"], ["numList", 34, 1, "#a9acb2"], ["bulList", 31, 1, "#a9acb2"]]],
  [4, [["fontCol", 33, 1, "#a9acb2"], ["grow", 24], ["shrink", 24], ["dedent", 23], ["indent", 21]]],
  [13, [["shapeA", 30, 1, "#b4b7bc"], ["shapes", 28, 1]]],
  [5, [["quick", 33, 1, "#b4b7bc"], ["bucket", 30]]],
];
const TextA = styled.div`
  width: 16px; height: 16px; box-sizing: border-box; border: 1px solid #5f6368; background: #fff; color: #111;
  font-family: "Liberation Sans", sans-serif; font-size: 10px; line-height: 14px; text-align: center;
`;
const renderGroups = (row, mt, h) => row.map(([ml, btns], i) => (
  <Group key={i} $ml={ml} $mt={mt} $h={h}>
    {btns.map(([k, w, arrow, ac]) => (
      <Btn key={k} $w={w}>
        {k === "textA" ? <TextA>A</TextA> : I[k]}
        {arrow ? <Arrow $c={ac} /> : null}
      </Btn>
    ))}
  </Group>
));

export default function App() {
  return (
    <Window>
      <Global />
      <OfficeBtn><OfficeLogo /></OfficeBtn>
      <TitleBar>
        <Qat>
          {I.qSave}
          {I.qUndo}
          <Arrow $c="#3c4650" />
          {I.qRedo}
        </Qat>
        <QatMore><Arrow $c="#3b4650" /></QatMore>
        <Title>程序员如何从小白到大神宣传ppt模板.pptx - Microsoft PowerPoint</Title>
        <WinControls>
          <WinBtn $w={29}>{I.min}</WinBtn>
          <WinBtn $w={26}>{I.max}</WinBtn>
          <WinBtn $w={47} $close>{I.close}</WinBtn>
        </WinControls>
      </TitleBar>
      <Client>
        <TabStrip>
          <Tab $active>经典菜单</Tab>
          {TABS.map(t => <Tab key={t}>{t}</Tab>)}
          <HelpWrap>{I.help}</HelpWrap>
        </TabStrip>
        <Ribbon>
          <MenuRow>
            {MENUS.map(([m, w]) => <Menu key={m} $w={w}>{m}<Arrow /></Menu>)}
          </MenuRow>
          <ToolRow $h={20}>{renderGroups(ROW1, 0, 18)}</ToolRow>
          <ToolRow $h={27}>
            <Combo $w={91} $ml={-1}><span /><Arrow $c="#a5a8ad" /></Combo>
            <Combo $w={42}>16<Arrow $c="#a5a8ad" /></Combo>
            <Group $ml={9} $mt={1} $h={19}>
              <Btn $w={22}><Letter>B</Letter></Btn>
              <Btn $w={24}><Letter $i>I</Letter></Btn>
              <Btn $w={24}><Letter $u>U</Letter></Btn>
              <Btn $w={24}><Letter $sh>S</Letter></Btn>
              <Btn $w={28}><Letter $s={13}>Aa</Letter><Arrow $c="#b4b7bc" /></Btn>
            </Group>
            {renderGroups(ROW2B, 1, 19)}
          </ToolRow>
          <Chevron />
        </Ribbon>
        <Workspace>
          <SidePane>
            <SideTabs>
              {I.tabs}
              <CloseX>{I.x}</CloseX>
            </SideTabs>
            <ListWrap>
              <ThumbList>
                {SLIDES.map(s => (
                  <ThumbRow key={s.n} $sel={s.title}>
                    <Num>{s.n}</Num>
                    <Thumb $c={s.c}>
                      {s.title ? (
                        <>
                          <MiniA>程序员</MiniA>
                          <MiniB>&lt;从菜鸟到大神&gt;</MiniB>
                          <MiniC>你需要准备做好哪些准备？</MiniC>
                        </>
                      ) : <MiniArt kind={s.kind} c={s.i} />}
                    </Thumb>
                  </ThumbRow>
                ))}
              </ThumbList>
              <ScrollBar>
                <SBtn><Up /></SBtn>
                <SThumb $h={114}><Grip /></SThumb>
                <SSpace />
                <SBtn><Down /></SBtn>
              </ScrollBar>
            </ListWrap>
          </SidePane>
          <Splitter />
          <MainCol>
            <Upper>
              <Stage>
                <Slide>
                  <Head>程序员</Head>
                  <Sub><span>&lt;</span>从菜鸟到大神<span>&gt;</span></Sub>
                  <Tag>
                    你需要准备做好哪些
                    <TagPart $c="#dff4fb">准</TagPart>
                    <TagPart $c="#f4fbfe">备</TagPart>
                    <TagPart $c="#d6eff9" $w={400}>&nbsp;?</TagPart>
                  </Tag>
                </Slide>
              </Stage>
              <ScrollBar $bg="#c7cace" $line="#b4b7bc">
                <SBtn $h={18}><Up $c="#6a6e74" /></SBtn>
                <SThumb $h={42} />
                <SSpace />
                <SBtn $h={16}><DoubleUp /></SBtn>
                <SBtn $h={16}><DoubleDown /></SBtn>
                <SBtn $h={15} />
              </ScrollBar>
            </Upper>
            <Sep />
            <Lower>
              <Notes>单击此处添加备注</Notes>
              <ScrollBar $bg="#c3c6cb" $line="#b4b7bc">
                <SBtn $h={16}><Up $c="#9ea1a7" /></SBtn>
                <SSpace />
                <SBtn $h={16}><Down $c="#9ea1a7" /></SBtn>
              </ScrollBar>
            </Lower>
          </MainCol>
        </Workspace>
        <StatusBar>
          <Seg $w={82} $pl={8}>幻灯片 1/17</Seg>
          <Seg $w={104} $pl={17} $ls={.2}>"Office 主题"</Seg>
          <Seg $w={142} $pl={8} $gap={14}>{I.spellS}<span>中文(简体，中国)</span></Seg>
          <StatusRight>
            <ViewGroup>
              <ViewBtn $on>{I.viewN}</ViewBtn>
              <ViewBtn>{I.viewS}</ViewBtn>
              <ViewBtn>{I.viewP}</ViewBtn>
            </ViewGroup>
            <Pct>49%</Pct>
            <ZoomBtn>{I.minus}</ZoomBtn>
            <Track>
              <Tick />
              <Handle>{I.handle}</Handle>
            </Track>
            <ZoomBtn>{I.plus}</ZoomBtn>
            <Fit>{I.fit}</Fit>
            <SizeGrip>{I.sgrip}</SizeGrip>
          </StatusRight>
        </StatusBar>
      </Client>
      <BottomFrame />
    </Window>
  );
}

function DoubleUp() {
  return <G w={10} h={11}><path d="M5 0l4 5H1zM5 6l4 5H1z" fill="#111" /></G>;
}
function DoubleDown() {
  return <G w={10} h={11}><path d="M1 0h8L5 5zM1 6h8l-4 5z" fill="#111" /></G>;
}
